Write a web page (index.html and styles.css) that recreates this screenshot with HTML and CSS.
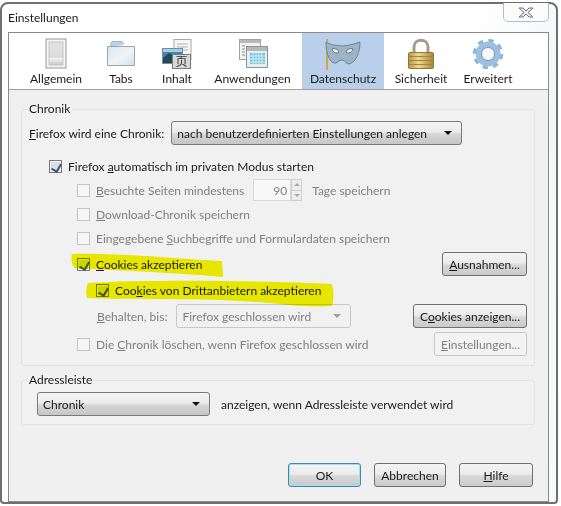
FILE: index.html
```html
<!DOCTYPE html>
<html lang="de">
<head>
    <meta charset="UTF-8">
    <title>Einstellungen</title>
    <link rel="stylesheet" href="styles.css">
</head>
<body>
<div class="window">
    <!-- Titelleiste -->
    <div class="titlebar">
        <span class="title">Einstellungen</span>
        <div class="close">
            <svg width="16" height="11" viewBox="0 0 16 11"><path d="M1 1h4l3 3 3-3h4l-5 4.500 5 4.500h-4l-3-3-3 3H1l5-4.500z" fill="#e8edf2" stroke="#6d7681"/></svg>
        </div>
    </div>

    <div class="panel">
        <!-- Symbolleiste -->
        <div class="toolbar">
            <div class="tab">
                <svg width="32" height="32" viewBox="0 0 32 32">
                    <defs><linearGradient id="sw" x1="0" y1="0" x2="0" y2="1"><stop offset="0" stop-color="#e2e2e2"/><stop offset=".68" stop-color="#dcdcdc"/><stop offset=".7" stop-color="#f6f6f6"/><stop offset="1" stop-color="#c4c4c4"/></linearGradient></defs>
                    <rect x="6" y="1" width="20" height="29" fill="#f4f4f4" stroke="#9a9a9a"/>
                    <rect x="9" y="4" width="14" height="23" fill="url(#sw)" stroke="#c8c8c8"/>
                </svg>
                <span>Allgemein</span>
            </div>
            <div class="tab">
                <svg width="32" height="32" viewBox="0 0 32 32">
                    <defs><linearGradient id="fo" x1="0" y1="0" x2="1" y2="1"><stop offset="0" stop-color="#d8e6f2"/><stop offset=".55" stop-color="#f1f4f7"/><stop offset="1" stop-color="#d3e0ec"/></linearGradient></defs>
                    <path d="M6 9V4.500l1-1h10l1 1V7h0" fill="#bcd4ea" stroke="#9fb2c4"/>
                    <path d="M2.500 8.500h27v19h-27z" fill="url(#fo)" stroke="#98a4b0"/>
                </svg>
                <span>Tabs</span>
            </div>
            <div class="tab">
                <svg width="32" height="32" viewBox="0 0 32 32">
                    <rect x="13" y="1.500" width="17" height="20" fill="#f6f6f6" stroke="#a8a8a8"/>
                    <path d="M16 6h11M16 9h11M16 12h11" stroke="#b4b4b4"/>
                    <rect x="1.500" y="10.500" width="20" height="15" fill="#3f86b4" stroke="#7c8a96"/>
                    <path d="M2 20l6-5 6 3 7-2v9H2z" fill="#26465c"/>
                    <path d="M2 11h19v3H2z" fill="#9fd0ea"/>
                    <rect x="11.500" y="16.500" width="18" height="14" fill="#d8d8d4" stroke="#7c7c7c"/>
                    <text x="20.500" y="28" class="glyph">页</text>
                </svg>
                <span>Inhalt</span>
            </div>
            <div class="tab">
                <svg width="32" height="32" viewBox="0 0 32 32">
                    <rect x="2.500" y="1.500" width="21" height="20" fill="#f2f2f2" stroke="#a0a0a0"/>
                    <rect x="3" y="2" width="20" height="3" fill="#b8b8b8"/>
                    <path d="M5 8h3M5 11h3M5 14h3M5 17h3" stroke="#8a8a8a"/>
                    <rect x="9.500" y="8.500" width="21" height="21" fill="#e8eef0" stroke="#8c9298"/>
                    <rect x="10" y="9" width="20" height="4" fill="#b4b8bc"/>
                    <rect x="13" y="15" width="15" height="11" fill="#6cc4d8"/>
                    <path d="M16 15v11M19 15v11M22 15v11M25 15v11M13 18h15M13 21h15M13 24h15" stroke="#d8f0f4"/>
                </svg>
                <span>Anwendungen</span>
            </div>
            <div class="tab selected">
                <svg width="38" height="32" viewBox="0 0 38 32">
                    <rect x="2" y="1" width="2" height="31" fill="#d0a83c"/>
                    <path d="M2 4c6 4 12 3 16 4 5 0 12-2 18-4 0 9-3 20-11 22-3 0-4-4-7-4s-5 4-8 3C5 24 2 14 2 4z" fill="#9db4c4" stroke="#6c8598"/>
                    <path d="M8 11c3-1 6 0 7 3-2 2-6 1-7-3zM29 11c-3-1-6 0-7 3 2 2 6 1 7-3z" fill="#e4eef4" stroke="#5c7486"/>
                </svg>
                <span>Datenschutz</span>
            </div>
            <div class="tab">
                <svg width="32" height="32" viewBox="0 0 32 32">
                    <defs><linearGradient id="lo" x1="0" y1="0" x2="1" y2="0"><stop offset="0" stop-color="#b8944c"/><stop offset=".4" stop-color="#f0d88c"/><stop offset="1" stop-color="#a8843c"/></linearGradient></defs>
                    <path d="M9 15V9c0-9 14-9 14 0v6" fill="none" stroke="#a89c84" stroke-width="3"/>
                    <rect x="3.500" y="14.500" width="25" height="16" rx="1" fill="url(#lo)" stroke="#94763c"/>
                    <path d="M4 18.500h24M4 22.500h24M4 26.500h24" stroke="#a08440"/>
                </svg>
                <span>Sicherheit</span>
            </div>
            <div class="tab">
                <svg width="32" height="32" viewBox="0 0 32 32">
                    <circle cx="16" cy="16" r="13.500" fill="none" stroke="#8fb6da" stroke-width="3.500" stroke-dasharray="5.300 5.300"/>
                    <circle cx="16" cy="16" r="9.500" fill="none" stroke="#9dc0e0" stroke-width="6"/>
                    <circle cx="16" cy="16" r="6.500" fill="#f6f8fa" stroke="#6c94b8"/>
                </svg>
                <span>Erweitert</span>
            </div>
        </div>

        <div class="content">
            <!-- Chronik -->
            <fieldset class="group">
                <legend>Chronik</legend>
                <div class="row">
                    <span class="label"><u>F</u>irefox wird eine Chronik:</span>
                    <div class="select select-history">
                        <span>nach benutzerdefinierten Einstellungen anlegen</span>
                        <i class="arrow"></i>
                    </div>
                </div>
                <div class="row row-private indent-1">
                    <i class="check checked"></i>
                    <span class="label">Firefox <u>a</u>utomatisch im privaten Modus starten</span>
                </div>
                <div class="row indent-2 disabled">
                    <i class="check"></i>
                    <span class="label"><u>B</u>esuchte Seiten mindestens</span>
                    <div class="spinner">
                        <span class="spin-value">90</span>
                        <div class="spin-buttons"><i class="up"></i><i class="down"></i></div>
                    </div>
                    <span class="label">Tage speichern</span>
                </div>
                <div class="row indent-2 disabled">
                    <i class="check"></i>
                    <span class="label"><u>D</u>ownload-Chronik speichern</span>
                </div>
                <div class="row indent-2 disabled">
                    <i class="check"></i>
                    <span class="label">Eingegebene <u>S</u>uchbegriffe und Formulardaten speichern</span>
                </div>
                <div class="row row-cookies indent-2">
                    <i class="check checked"></i>
                    <span class="label"><u>C</u>ookies akzeptieren</span>
                    <div class="button btn-exceptions"><span><u>A</u>usnahmen...</span></div>
                </div>
                <div class="row row-third indent-3">
                    <i class="check checked"></i>
                    <span class="label">Coo<u>k</u>ies von Drittanbietern akzeptieren</span>
                </div>
                <div class="row row-keep">
                    <span class="label disabled keep-label"><u>B</u>ehalten, bis:</span>
                    <div class="select select-keep disabled">
                        <span>Firefox geschlossen wird</span>
                        <i class="arrow"></i>
                    </div>
                    <div class="button btn-cookies"><span>C<u>o</u>okies anzeigen...</span></div>
                </div>
                <div class="row row-clear indent-2">
                    <i class="check"></i>
                    <span class="label disabled">Die <u>C</u>hronik löschen, wenn Firefox geschlossen wird</span>
                    <div class="button btn-settings disabled"><span><u>E</u>instellungen...</span></div>
                </div>
            </fieldset>

            <!-- Adressleiste -->
            <fieldset class="group group-address">
                <legend>Adressleiste</legend>
                <div class="row">
                    <div class="select select-address">
                        <span>Chronik</span>
                        <i class="arrow"></i>
                    </div>
                    <span class="label">anzeigen, wenn Adressleiste verwendet wird</span>
                </div>
            </fieldset>

            <div class="footer">
                <div class="button btn-ok"><span>OK</span></div>
                <div class="button btn-cancel"><span>Abbrechen</span></div>
                <div class="button btn-help"><span><u>H</u>ilfe</span></div>
            </div>
        </div>
    </div>

    <!-- Textmarker -->
    <svg class="marker" width="561" height="506" viewBox="0 0 561 506">
        <path d="M72 254C110 252 180 259 222 261L223 277C180 273 110 270 74 268Q70 261 72 254Z"/>
        <path d="M88 283C150 279 280 281 332 284Q335 295 332 306C300 308 280 303 240 301C190 298 130 300 87 298Q85 290 88 283Z"/>
    </svg>
</div>
</body>
</html>
```

FILE: styles.css
```css
* {
    box-sizing: border-box;
}

body {
    margin: 0;
    background-color: #fff;
    font-family: Lato, "Open Sans", sans-serif;
    font-size: 12px;
    color: #1a1a1a;
    overflow: hidden;
}

/* Fenster */
.window {
    width: 558px;
    height: 502px;
    margin: 2px 0 0 0;
    padding: 0 7px 0 6px;
    border: 2px solid #6f6f6f;
    border-radius: 8px 8px 4px 4px;
    background: linear-gradient(115deg, #fff 60%, #f4f6f8 75%, #f8fafb);
}

.titlebar {
    display: flex;
    justify-content: space-between;
    height: 28px;
}

.title {
    margin: 6px 0 0 0;
}

.close {
    display: flex;
    align-items: center;
    justify-content: center;
    width: 46px;
    height: 19px;
    margin-top: -1px;
    border: 1px solid #b8bcc2;
    border-top: none;
    border-radius: 0 0 5px 5px;
    background-color: #fbfbfb;
}

.panel {
    height: 470px;
    border: 1px solid #8a8a8a;
    background-color: #f0f0f0;
}

/* Symbolleiste */
.toolbar {
    display: grid;
    grid-template-columns: 70px 60px 52px 99px 82px 74px 60px;
    height: 57px;
    padding-left: 12px;
    background-color: #fff;
    border-bottom: 1px solid #a0a0a0;
}

.tab {
    display: flex;
    flex-direction: column;
    align-items: center;
    padding-top: 5px;
    white-space: nowrap;
}

.tab svg {
    display: block;
    margin-bottom: 1px;
}

.tab.selected {
    background-color: #b9cfea;
}

.glyph {
    font-family: "Noto Sans CJK SC", sans-serif;
    font-size: 12px;
    text-anchor: middle;
    fill: #333;
}

/* Inhalt */
.content {
    padding: 12px 13px 0 12px;
}

.group {
    margin: 0;
    padding: 5px 7px 0;
    min-width: 0;
    height: 264px;
    border: 1px solid #e2e2e2;
    border-radius: 3px;
    background-color: #f1f1f1;
}

.group-address {
    height: 52px;
    margin-top: 7px;
    padding-top: 5px;
}

legend {
    margin-left: -2px;
    padding: 0 2px;
    line-height: 14px;
}

.row {
    display: flex;
    align-items: center;
    height: 24px;
}

.row-private {
    margin-top: 9px;
}

.row-cookies,
.row-third,
.row-keep {
    margin-top: 2px;
}

.row-clear {
    margin-top: 4px;
}

.indent-1 {
    padding-left: 20px;
}

.indent-2 {
    padding-left: 48px;
}

.indent-3 {
    padding-left: 67px;
}

.label {
    white-space: nowrap;
}

.disabled,
.disabled .label {
    color: #7f7f7f;
}

.check {
    flex: none;
    width: 13px;
    height: 13px;
    margin-right: 6px;
    border: 1px solid #c4c4c4;
    background-color: #f6f6f6;
}

.check.checked {
    position: relative;
    border-color: #7a7a7a;
    background-color: #d6deea;
    box-shadow: inset 0 0 0 1px #f4f4f4;
}

.check.checked::after {
    content: "";
    position: absolute;
    left: 3px;
    top: 1px;
    width: 5px;
    height: 8px;
    border: solid #46567a;
    border-width: 0 2px 2px 0;
    transform: rotate(30deg);
}

/* Auswahlfelder und Knoepfe */
.select {
    display: flex;
    align-items: center;
    justify-content: space-between;
    height: 24px;
    padding: 0 9px 0 5px;
    border: 1px solid #7a7a7a;
    border-radius: 3px;
    background: linear-gradient(#f4f4f4 0%, #ececec 45%, #d6d6d6 55%, #c6c6c6 100%);
    white-space: nowrap;
}

.arrow {
    width: 0;
    height: 0;
    border: 4px solid transparent;
    border-top-color: #111;
    border-bottom: none;
}

.select-history {
    width: 291px;
    margin-left: 7px;
}

.select-address {
    width: 173px;
    margin: 0 11px 0 8px;
}

.select-keep {
    width: 175px;
    margin-left: 9px;
    border-color: #c8c8c8;
    background: #f1f1f1;
}

.select-keep .arrow {
    border-top-color: #a0a0a0;
}

.keep-label {
    margin-left: 68px;
}

.spinner {
    display: flex;
    height: 22px;
    margin: 0 10px 0 9px;
}

.spin-value {
    width: 38px;
    padding: 3px 3px 0 0;
    text-align: right;
    border: 1px solid #d8d8d8;
    background-color: #f8f8f8;
}

.spin-buttons {
    display: flex;
    flex-direction: column;
    width: 11px;
    border: 1px solid #cfcfcf;
    background-color: #eee;
}

.spin-buttons i {
    flex: 1;
    display: flex;
    align-items: center;
    justify-content: center;
}

.spin-buttons i::after {
    content: "";
    border: 3px solid transparent;
}

.spin-buttons .up::after {
    border-bottom-color: #aaa;
    border-top: none;
}

.spin-buttons .down {
    border-top: 1px solid #cfcfcf;
}

.spin-buttons .down::after {
    border-top-color: #aaa;
    border-bottom: none;
}

.button {
    display: flex;
    align-items: center;
    justify-content: center;
    height: 24px;
    border: 1px solid #6f6f6f;
    border-radius: 3px;
    background: linear-gradient(#f4f4f4 0%, #ececec 45%, #d8d8d8 55%, #cacaca 100%);
    white-space: nowrap;
}

.button.disabled {
    border-color: #c8c8c8;
    background: #f3f3f3;
}

.btn-exceptions,
.btn-cookies,
.btn-settings {
    margin-left: auto;
}

.btn-exceptions {
    width: 85px;
}

.btn-cookies {
    width: 114px;
}

.btn-settings {
    width: 93px;
}

.footer {
    display: flex;
    justify-content: flex-end;
    gap: 13px;
    margin-top: 38px;
    margin-right: 2px;
}

.btn-ok {
    width: 73px;
    border-color: #3c8ab4;
    box-shadow: inset 0 0 0 1px #a8dcf0;
}

.btn-cancel {
    width: 72px;
}

.btn-help {
    width: 74px;
}

/* Textmarker liegt ueber dem Dialog */
.marker {
    position: absolute;
    left: 0;
    top: 0;
    pointer-events: none;
    mix-blend-mode: multiply;
}

.marker path {
    fill: #f4f400;
}
```
